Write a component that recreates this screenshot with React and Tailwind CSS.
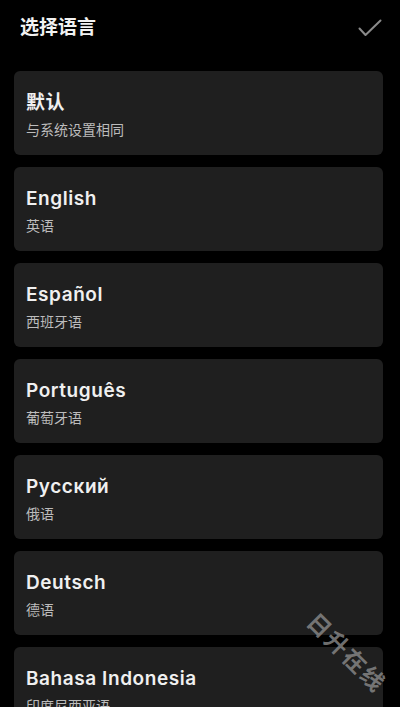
import React from 'react';

const languages = [
  { name: '默认', desc: '与系统设置相同' },
  { name: 'English', desc: '英语' },
  { name: 'Español', desc: '西班牙语' },
  { name: 'Português', desc: '葡萄牙语' },
  { name: 'Русский', desc: '俄语' },
  { name: 'Deutsch', desc: '德语' },
  { name: 'Bahasa Indonesia', desc: '印度尼西亚语' },
];

const font = { fontFamily: 'Inter, "Noto Sans CJK SC", sans-serif' };

const App = () => {
  return (
    <div className="relative h-[707px] w-[400px] overflow-hidden bg-black text-white" style={font}>
      <div className="flex h-14 items-center justify-between pl-5 pr-[18px]">
        <h1 className="text-[19px] font-bold text-[#f2f2f2]">选择语言</h1>
        <svg width="24" height="18" viewBox="0 0 24 18" fill="none">
          <path d="M1.5 9.5 L7.5 16 L22.5 1.5" stroke="#8a8a8a" strokeWidth="2" strokeLinecap="round" strokeLinejoin="round" />
        </svg>
      </div>

      <div className="flex flex-col gap-3 px-[14px] pt-[15px] pr-[17px]">
        {languages.map((lang) => (
          <div key={lang.name} className="flex h-[84px] shrink-0 flex-col justify-center rounded-md bg-[#1f1f1f] px-3 pt-1">
            <span className="text-[19px] font-semibold leading-6 tracking-[0.03em] text-[#f0f0f0]">{lang.name}</span>
            <span className="mt-[6px] text-[14px] leading-[18px] text-[#bcbcbc]">{lang.desc}</span>
          </div>
        ))}
      </div>

      {/* watermark */}
      <div className="pointer-events-none absolute left-[296px] top-[636px] rotate-[45deg] text-[23px] font-bold tracking-[2px] text-[#8c8c8c]/80">
        日升在线
      </div>
    </div>
  );
};

export default App;
